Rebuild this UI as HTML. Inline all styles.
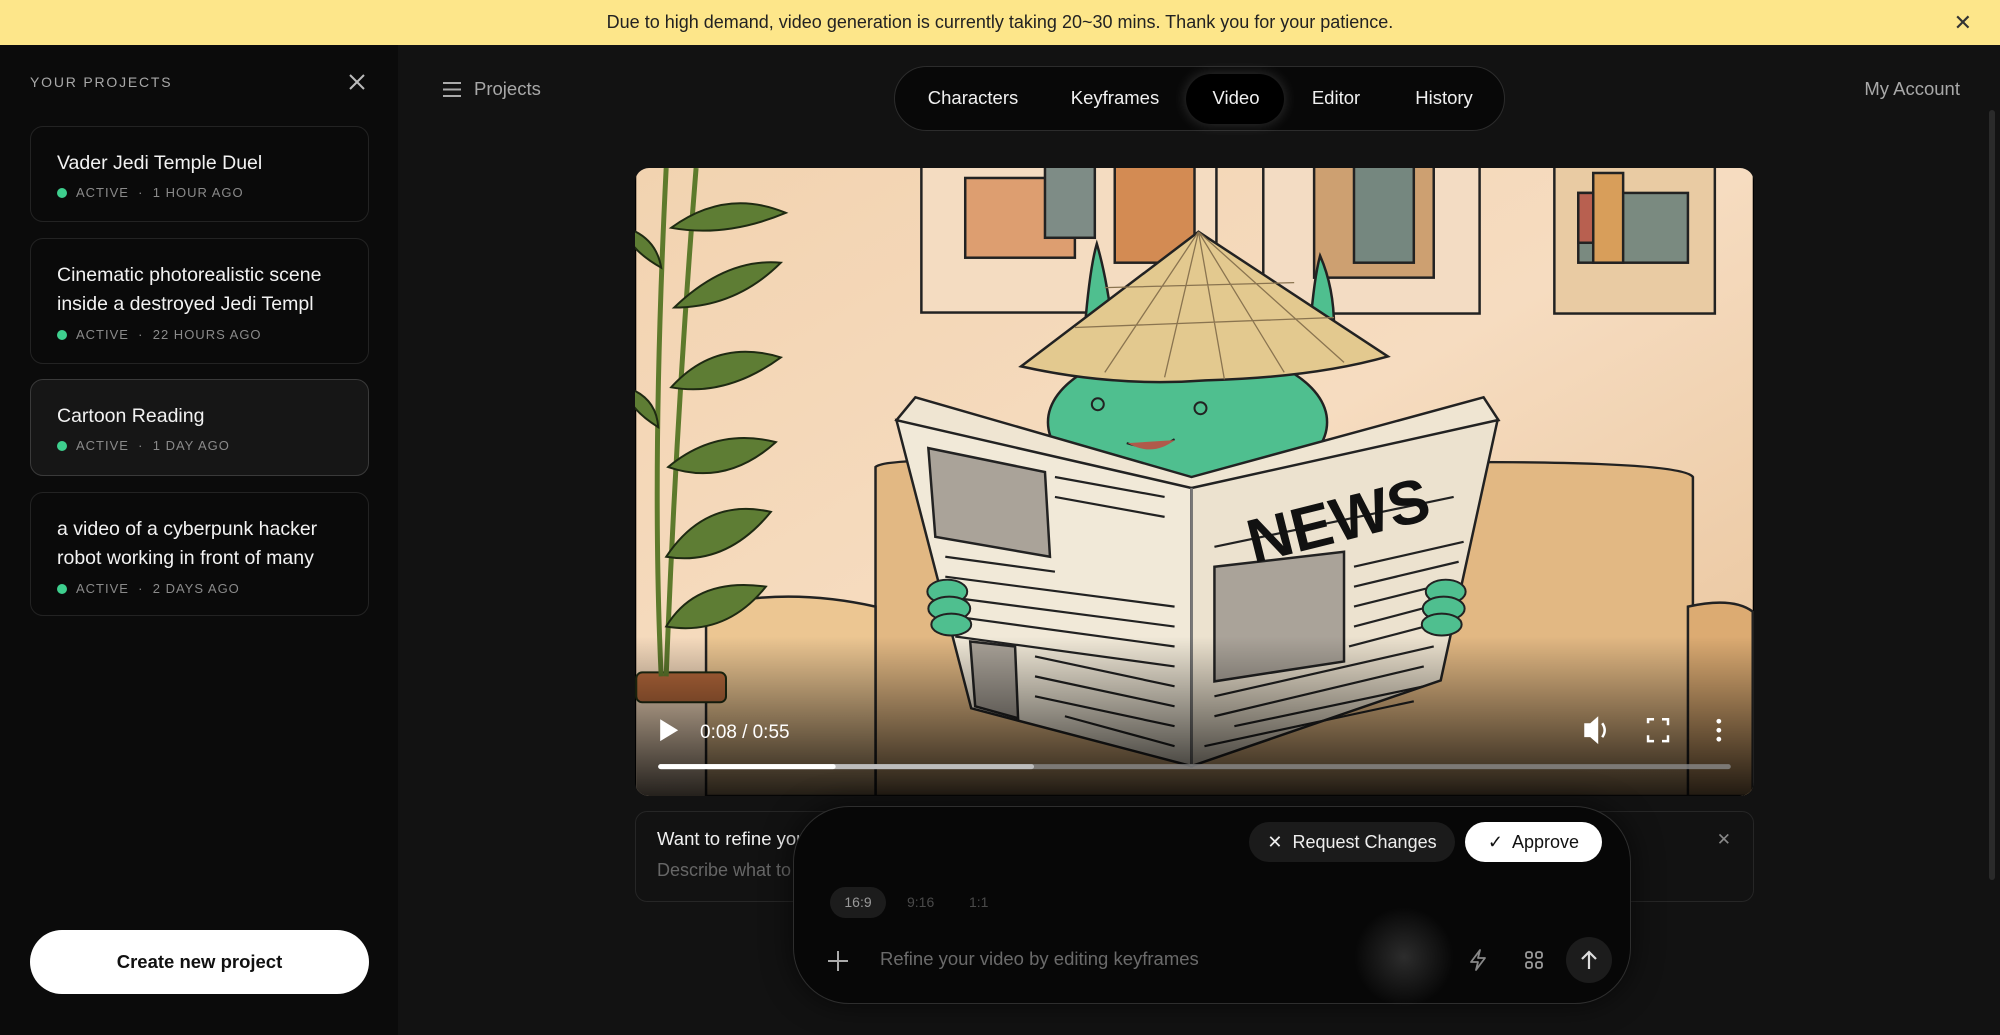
<!DOCTYPE html>
<html><head><meta charset="utf-8"><style>
*{box-sizing:border-box;margin:0;padding:0}
body{width:2000px;height:1035px;overflow:hidden;background:#121212;font-family:"Liberation Sans",sans-serif;color:#fff;position:relative}
.banner{position:absolute;left:0;top:0;width:2000px;height:45px;background:#fde68a;color:#222;font-size:18px;text-align:center;line-height:45px}
.banner .x{position:absolute;right:28px;top:0;font-size:22px;color:#333}
.side{position:absolute;left:0;top:45px;width:398px;height:990px;background:#0b0b0b}
.side h4{position:absolute;left:30px;top:29px;font-size:14px;letter-spacing:1.8px;color:#a8a8a8;font-weight:normal}
.card{position:absolute;left:30px;width:339px;border:1.5px solid #232323;border-radius:13px;background:#0a0a0a}
.card.sel{background:#161616;border-color:#3a3a3a}
.card .t{position:absolute;left:26px;top:22px;font-size:19.5px;line-height:29px;color:#f2f2f2;width:300px}
.card .m{position:absolute;left:26px;font-size:13px;letter-spacing:1px;color:#8a8a8a}
.card .m i{display:inline-block;width:10px;height:10px;border-radius:50%;background:#3ecf8e;margin-right:9px;vertical-align:-1px}
.create{position:absolute;left:30px;top:885px;width:339px;height:64px;border-radius:32px;background:#fff;color:#111;font-size:18.5px;font-weight:bold;text-align:center;line-height:64px}
.nav{position:absolute;left:894px;top:66px;width:611px;height:65px;border:1.5px solid #2c2c2c;border-radius:33px;background:#080808}
.nav span{position:absolute;top:0;line-height:62px;font-size:18.5px;color:#f0f0f0;transform:translateX(-50%)}
.nav .act{position:absolute;left:291px;top:7px;width:98px;height:50px;border-radius:25px;background:#000;box-shadow:0 0 14px rgba(255,255,255,.18)}
.video{position:absolute;left:635px;top:168px;width:1119px;height:628px;border-radius:14px;overflow:hidden;background:#000}
.refine{position:absolute;left:635px;top:811px;width:1119px;height:91px;border:1.5px solid #262626;border-radius:12px;background:#121212}
.comp{position:absolute;left:793px;top:806px;width:838px;height:198px;border:1.5px solid #2e2e2e;border-radius:56px;background:#070707;box-shadow:0 0 30px rgba(0,0,0,.6)}
.btn{position:absolute;top:15px;height:40px;border-radius:20px;font-size:18px;line-height:40px}
</style></head><body>
<div class="banner">Due to high demand, video generation is currently taking 20~30 mins. Thank you for your patience.<span class="x">✕</span></div>

<div class="side">
<h4>YOUR PROJECTS</h4>
<svg style="position:absolute;left:348px;top:28px" width="18" height="18" viewBox="0 0 18 18"><path d="M2 2L16 16M16 2L2 16" stroke="#bbb" stroke-width="2"/></svg>
<div class="card" style="top:81px;height:96px"><div class="t">Vader Jedi Temple Duel</div><div class="m" style="top:58px"><i></i>ACTIVE &nbsp;·&nbsp; 1 HOUR AGO</div></div>
<div class="card" style="top:193px;height:126px"><div class="t">Cinematic photorealistic scene inside a destroyed Jedi Templ</div><div class="m" style="top:88px"><i></i>ACTIVE &nbsp;·&nbsp; 22 HOURS AGO</div></div>
<div class="card sel" style="top:334px;height:97px"><div class="t">Cartoon Reading</div><div class="m" style="top:58px"><i></i>ACTIVE &nbsp;·&nbsp; 1 DAY AGO</div></div>
<div class="card" style="top:447px;height:124px"><div class="t">a video of a cyberpunk hacker robot working in front of many</div><div class="m" style="top:88px"><i></i>ACTIVE &nbsp;·&nbsp; 2 DAYS AGO</div></div>
<div class="create">Create new project</div>
</div>

<svg style="position:absolute;left:442px;top:81px" width="20" height="17" viewBox="0 0 20 17"><path d="M1 2H19M1 8.5H19M1 15H19" stroke="#aaa" stroke-width="2"/></svg>
<div style="position:absolute;left:474px;top:78px;font-size:18.5px;color:#a8a8a8">Projects</div>
<div style="position:absolute;right:40px;top:78px;font-size:18.5px;color:#a8a8a8">My Account</div>
<div style="position:absolute;left:1989px;top:110px;width:6px;height:770px;border-radius:3px;background:#2a2a2a"></div>

<div class="nav"><div class="act"></div>
<span style="left:78px">Characters</span><span style="left:220px">Keyframes</span><span style="left:341px">Video</span><span style="left:441px">Editor</span><span style="left:549px">History</span></div>

<div class="video">
<svg width="1119" height="628" viewBox="0 0 1120 630">
<defs>
<linearGradient id="wall" x1="0" y1="0" x2="1" y2="1"><stop offset="0" stop-color="#f2d3b0"/><stop offset=".5" stop-color="#f6dcc0"/><stop offset="1" stop-color="#e8c39a"/></linearGradient>
<linearGradient id="dark" x1="0" y1="0" x2="0" y2="1"><stop offset="0" stop-color="#000" stop-opacity="0"/><stop offset="1" stop-color="#000" stop-opacity=".85"/></linearGradient>
</defs>
<rect width="1120" height="630" fill="url(#wall)"/>
<g stroke="#222" stroke-width="2.5">
<rect x="286" y="-5" width="296" height="150" fill="#f4dcc1"/><rect x="330" y="10" width="110" height="80" fill="#dd9e70"/><rect x="410" y="-5" width="50" height="75" fill="#7e8c86"/><rect x="480" y="-5" width="80" height="100" fill="#d38b53"/>
<rect x="629" y="-5" width="217" height="151" fill="#f3dcc3"/><rect x="680" y="-5" width="120" height="115" fill="#cda071"/><rect x="720" y="-5" width="60" height="100" fill="#75877f"/>
<rect x="921" y="-5" width="161" height="151" fill="#e9cba3"/><rect x="945" y="25" width="110" height="70" fill="#7a8a80"/><rect x="960" y="5" width="30" height="90" fill="#d89e5a"/><rect x="945" y="25" width="15" height="50" fill="#b86050"/>
</g>
<g stroke="#222" stroke-width="2.5" fill="#e2b883">
<path d="M240 300 Q250 290 400 295 L840 295 Q1050 295 1060 310 L1060 630 L240 630Z"/>
<path d="M70 440 Q150 420 240 440 L240 630 L70 630Z" fill="#ecc692"/>
<path d="M1055 440 Q1100 430 1120 445 L1120 630 L1055 630Z" fill="#dcab72"/>
</g>
<g stroke="#1e2a12" stroke-width="2">
<rect x="0" y="506" width="90" height="30" rx="6" fill="#b86a3c"/>
<path d="M25 510 Q15 300 30 0 M30 510 Q40 250 60 0" stroke="#5d7a2c" stroke-width="5" fill="none"/>
<g fill="#5e7d34">
<path d="M35 60 Q90 20 150 45 Q90 70 35 60Z"/><path d="M38 140 Q90 90 145 95 Q100 140 38 140Z"/><path d="M35 220 Q80 170 145 190 Q90 230 35 220Z"/><path d="M32 300 Q80 260 140 275 Q90 320 32 300Z"/><path d="M30 390 Q70 330 135 345 Q90 400 30 390Z"/><path d="M30 460 Q60 410 130 420 Q90 470 30 460Z"/>
<path d="M25 100 Q-10 80 -10 60 Q20 70 25 100Z"/><path d="M22 260 Q-10 240 -10 220 Q20 230 22 260Z"/>
</g></g>
<g stroke="#222" stroke-width="2.5" fill="#4fbf8f">
<path d="M450 160 Q455 100 462 76 Q472 110 478 160Z"/><path d="M676 160 Q680 110 686 88 Q700 120 700 160Z"/>
<ellipse cx="553" cy="255" rx="140" ry="75"/>
</g>
<path d="M564 64 L386 199 Q480 220 571 213 Q680 210 754 189Z" fill="#e3c98f" stroke="#222" stroke-width="2.5"/>
<g stroke="#8a7450" stroke-width="1.3" fill="none"><path d="M564 64 L470 205M564 64 L530 210M564 64 L590 212M564 64 L650 205M564 64 L710 195M440 160 L700 150M470 120 L660 115"/></g>
<g stroke="#222" stroke-width="2" fill="none"><circle cx="463" cy="237" r="6"/><circle cx="566" cy="241" r="6"/><path d="M492 276 Q520 285 540 272"/></g>
<path d="M493 276 Q518 290 540 273Z" fill="#b05a4a"/>
<g stroke="#222" stroke-width="2.5">
<path d="M280 230 L557 310 L850 230 L865 253 L557 330 L261 253Z" fill="#efe5d2"/>
<path d="M261 253 L557 321 L557 600 L336 542Z" fill="#f1e9d8"/>
<path d="M557 321 L864 253 L807 514 L557 600Z" fill="#ece2cf"/>
<path d="M557 321 L557 600" stroke="#777"/>
<path d="M293 281 L410 305 L415 390 L300 370Z" fill="#aaa399"/>
<path d="M335 475 L380 480 L383 552 L340 540Z" fill="#aaa399"/>
<path d="M580 400 L710 385 L710 495 L580 515Z" fill="#aaa399"/>
</g>
<g stroke="#222" stroke-width="2.2">
<path d="M420 310 L530 330M420 330 L530 350M310 390 L420 405M310 410 L540 440M310 430 L540 460M320 450 L540 480M320 470 L540 500M400 490 L540 520M400 510 L540 540M400 530 L540 560M430 550 L540 580M580 380 L820 330M580 530 L800 480M580 550 L790 500M720 400 L830 375M720 420 L825 395M720 440 L820 415M720 460 L815 435M715 480 L810 455M600 560 L790 520M570 580 L780 535"/>
</g>
<text x="610" y="378" font-family="Liberation Sans" font-weight="bold" font-size="62" fill="#111" transform="rotate(-14 690 350)">NEWS</text>
<g fill="#4fbf8f" stroke="#222" stroke-width="2"><ellipse cx="312" cy="425" rx="20" ry="12"/><ellipse cx="314" cy="442" rx="21" ry="12"/><ellipse cx="316" cy="458" rx="20" ry="11"/><ellipse cx="812" cy="425" rx="20" ry="12"/><ellipse cx="810" cy="442" rx="21" ry="12"/><ellipse cx="808" cy="458" rx="20" ry="11"/></g>
<rect x="0" y="470" width="1120" height="160" fill="url(#dark)"/>
<path d="M24 553 L24 575 L42 564Z" fill="#fff"/>
<text x="64" y="572" font-family="Liberation Sans" font-size="19" fill="#fff">0:08 / 0:55</text>
<g fill="#fff"><path d="M951 557 L957 557 L965 550 L965 578 L957 571 L951 571Z"/><path d="M969 557 Q974 564 969 571" stroke="#fff" stroke-width="2.5" fill="none"/></g>
<path d="M1015 557 V553 H1021 M1029 553 H1035 V559 M1035 569 V575 H1029 M1021 575 H1015 V569" stroke="#fff" stroke-width="2.5" fill="none"/>
<g fill="#fff"><circle cx="1086" cy="555" r="2.4"/><circle cx="1086" cy="564" r="2.4"/><circle cx="1086" cy="573" r="2.4"/></g>
<rect x="22" y="598" width="1076" height="5" rx="2.5" fill="#8a8a8a" opacity=".8"/>
<rect x="22" y="598" width="377" height="5" rx="2.5" fill="#bdbdbd"/>
<rect x="22" y="598" width="178" height="5" rx="2.5" fill="#fff"/>
</svg>
</div>

<div class="refine">
<div style="position:absolute;left:21px;top:16px;font-size:18.5px;color:#f0f0f0">Want to refine your video?</div>
<div style="position:absolute;left:21px;top:48px;font-size:18px;color:#666">Describe what to change</div>
<div style="position:absolute;right:22px;top:18px;font-size:17px;color:#888">✕</div>
</div>

<div class="comp">
<div class="btn" style="left:455px;width:206px;background:#1b1b1b;color:#eee;text-align:center">✕&nbsp; Request Changes</div>
<div class="btn" style="left:671px;width:137px;background:#fff;color:#111;text-align:center">✓&nbsp; Approve</div>
<div style="position:absolute;left:36px;top:80px;width:56px;height:31px;border-radius:16px;background:#1c1c1c;color:#999;font-size:14px;text-align:center;line-height:31px">16:9</div>
<div style="position:absolute;left:113px;top:80px;color:#4a4a4a;font-size:14px;line-height:31px">9:16</div>
<div style="position:absolute;left:175px;top:80px;color:#4a4a4a;font-size:14px;line-height:31px">1:1</div>
<svg style="position:absolute;left:33px;top:143px" width="22" height="22" viewBox="0 0 22 22"><path d="M11 1V21M1 11H21" stroke="#aaa" stroke-width="2"/></svg>
<div style="position:absolute;left:86px;top:141px;font-size:18.5px;color:#6a6a6a">Refine your video by editing keyframes</div>
<div style="position:absolute;left:560px;top:100px;width:100px;height:100px;border-radius:50%;background:radial-gradient(circle,rgba(90,90,90,.45),rgba(0,0,0,0) 70%)"></div>
<svg style="position:absolute;left:674px;top:141px" width="20" height="24" viewBox="0 0 20 24"><path d="M12 2L3 14H10L8 22L17 10H10Z" stroke="#888" stroke-width="1.8" fill="none" stroke-linejoin="round"/></svg>
<svg style="position:absolute;left:731px;top:144px" width="18" height="18" viewBox="0 0 18 18"><g stroke="#999" stroke-width="1.8" fill="none"><rect x="1" y="1" width="6" height="6" rx="2"/><rect x="11" y="1" width="6" height="6" rx="2"/><rect x="1" y="11" width="6" height="6" rx="2"/><rect x="11" y="11" width="6" height="6" rx="2"/></g></svg>
<div style="position:absolute;left:772px;top:130px;width:46px;height:46px;border-radius:50%;background:#1c1c1c"></div>
<svg style="position:absolute;left:785px;top:142px" width="20" height="22" viewBox="0 0 20 22"><path d="M10 20V3M3 10L10 3L17 10" stroke="#ddd" stroke-width="2.2" fill="none"/></svg>
</div>
</body></html>
